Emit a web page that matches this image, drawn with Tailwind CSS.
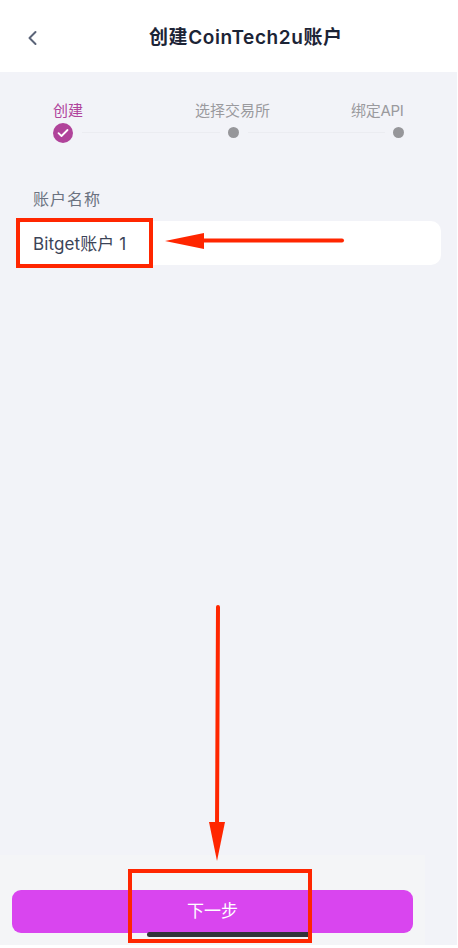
<!DOCTYPE html>
<html lang="zh">
<head>
    <meta charset="UTF-8">
    <script src="https://cdn.jsdelivr.net/npm/@tailwindcss/browser@4"></script>
    <title>创建账户</title>
</head>
<body class="bg-white">
    <div class="relative w-[457px] h-[945px] bg-[#f2f3f8] overflow-hidden flex flex-col font-['Inter','Noto_Sans_CJK_SC',sans-serif]">
        <!--header-->
        <div class="h-[72px] bg-white flex items-center pl-[149px] pt-[3px] relative shrink-0">
            <svg class="absolute left-[27px] top-[30px]" width="11" height="16" viewBox="0 0 11 16" fill="none"><path d="M8.5 2 L2.5 8 L8.5 14" stroke="#5b6478" stroke-width="2" stroke-linecap="round" stroke-linejoin="round"/></svg>
            <h1 class="text-[19px] tracking-[0.6px] font-semibold text-[#1c2436] leading-none">创建CoinTech2u账户</h1>
        </div>
        <!--steps-->
        <div class="h-[117px] shrink-0 pt-[30px]">
            <div class="flex text-[15px] leading-[18px] text-[#9a9a9e] whitespace-nowrap">
                <span class="ml-[53px] w-[142px] text-[#b0449c]">创建</span>
                <span class="w-[156px]">选择交易所</span>
                <span class="tracking-[-0.3px]">绑定API</span>
            </div>
            <div class="flex items-center pl-[53px] mt-[2px] h-[21px]">
                <span class="w-[20px] h-[20px] rounded-full bg-[#b0439a] flex items-center justify-center">
                    <svg width="12" height="10" viewBox="0 0 12 10" fill="none"><path d="M1.5 5.2 L4.5 8 L10.5 2" stroke="white" stroke-width="1.8" stroke-linecap="round" stroke-linejoin="round"/></svg>
                </span>
                <span class="w-[138px] h-px bg-[#ebecf1] ml-[9px]"></span>
                <span class="w-[11px] h-[11px] rounded-full bg-[#96969a] ml-[8px]"></span>
                <span class="w-[137px] h-px bg-[#ebecf1] ml-[9px]"></span>
                <span class="w-[11px] h-[11px] rounded-full bg-[#96969a] ml-[8px]"></span>
            </div>
        </div>
        <!--form-->
        <label class="pl-[33px] text-[16px] leading-[20px] tracking-[1px] text-[#6b7280]">账户名称</label>
        <div class="mx-[16px] mt-[12px] h-[44px] w-[425px] bg-white rounded-[10px] flex items-center pl-[17px] pt-[4px] text-[17px] tracking-[0.1px] text-[#3b4458]">Bitget账户 1</div>
        <!--bottom button-->
        <div class="mt-auto w-[425px] h-[90px] bg-[#f4f5f7] px-[12px] pt-[35px] pb-[12px]">
            <button class="w-[401px] h-[43px] rounded-[9px] bg-[#d945ef] text-white text-[17px]">下一步</button>
        </div>
        <!--home indicator-->
        <div class="absolute left-[147px] top-[932px] w-[161px] h-[5px] rounded-l-full bg-[#33333a]"></div>

        <!--annotations-->
        <div class="absolute left-[16px] top-[218px] w-[137px] h-[50px] border-[4px] border-[#ff2600]"></div>
        <div class="absolute left-[128px] top-[869px] w-[184px] h-[74px] border-[4px] border-[#ff2600]"></div>
        <svg class="absolute left-0 top-0" width="457" height="945" viewBox="0 0 457 945" fill="none">
            <path d="M200 240.5 H342" stroke="#ff2600" stroke-width="4" stroke-linecap="round"/>
            <path d="M165 241 L204 233 V249 Z" fill="#ff2600"/>
            <path d="M218 607 L217 830" stroke="#ff2600" stroke-width="4" stroke-linecap="round"/>
            <path d="M209 822 H225 L217 861 Z" fill="#ff2600"/>
        </svg>
    </div>
</body>
</html>
